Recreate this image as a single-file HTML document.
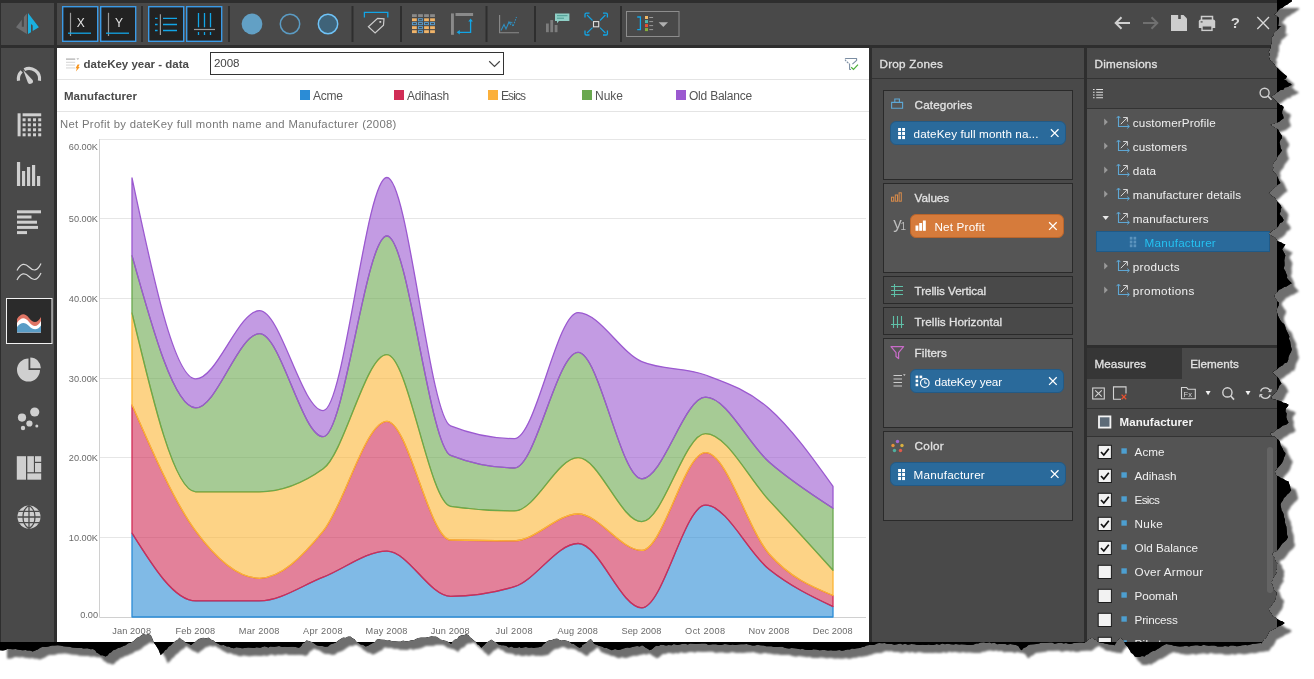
<!DOCTYPE html>
<html><head><meta charset="utf-8"><title>Discover</title>
<style>
*{box-sizing:border-box;margin:0;padding:0}
html,body{width:1314px;height:679px;overflow:hidden;background:#fff;font-family:"Liberation Sans",sans-serif;}
#shadow{position:absolute;left:0;top:0;width:1314px;height:679px;filter:drop-shadow(0 0 .5px rgba(0,0,0,.9)) drop-shadow(7.5px 8px 1.1px rgba(0,0,0,.57));}
#app{position:absolute;left:0;top:0;width:1314px;height:679px;background:#000;overflow:hidden;
clip-path:polygon(0.0px 0.0px,1291.8px 0.0px,1291.8px 1.6px,1289.2px 3.1px,1287.1px 4.7px,1285.2px 5.4px,1282.1px 7.9px,1280.2px 8.5px,1278.2px 10.4px,1276.8px 12.4px,1274.0px 14.6px,1276.9px 16.2px,1278.9px 17.8px,1278.9px 20.0px,1278.6px 23.7px,1278.2px 25.9px,1279.9px 26.3px,1281.5px 25.9px,1279.8px 26.9px,1278.0px 29.3px,1275.6px 30.8px,1274.1px 32.3px,1273.6px 35.1px,1271.8px 37.3px,1271.8px 40.2px,1271.6px 42.7px,1270.9px 45.0px,1270.8px 47.0px,1269.6px 50.0px,1268.5px 51.8px,1269.5px 54.0px,1268.9px 56.9px,1269.8px 59.9px,1272.4px 62.0px,1273.9px 64.0px,1275.6px 66.4px,1277.9px 68.2px,1280.0px 70.4px,1282.6px 72.8px,1285.0px 74.8px,1287.0px 76.2px,1285.9px 78.5px,1283.7px 79.4px,1286.0px 80.3px,1288.3px 82.8px,1290.4px 83.6px,1291.8px 84.9px,1289.9px 85.5px,1287.8px 87.1px,1284.7px 87.4px,1283.3px 89.7px,1280.5px 90.1px,1278.0px 91.9px,1276.5px 92.4px,1274.4px 94.7px,1273.3px 95.1px,1270.8px 97.2px,1272.8px 98.0px,1274.8px 99.9px,1276.9px 102.3px,1278.2px 103.0px,1280.1px 105.0px,1281.6px 105.0px,1283.7px 106.9px,1283.3px 108.4px,1282.2px 111.1px,1282.1px 113.4px,1283.1px 115.4px,1283.7px 118.3px,1280.9px 120.2px,1279.2px 121.7px,1277.3px 122.5px,1275.3px 123.1px,1272.2px 124.0px,1269.8px 124.8px,1272.1px 126.1px,1274.1px 127.4px,1276.7px 128.4px,1278.2px 129.6px,1279.4px 132.1px,1280.5px 133.7px,1282.1px 136.1px,1281.9px 138.3px,1280.5px 139.7px,1279.5px 142.6px,1280.3px 145.4px,1280.6px 148.1px,1282.1px 150.7px,1281.0px 151.7px,1279.7px 153.9px,1278.2px 155.5px,1277.1px 157.5px,1275.7px 160.2px,1274.0px 162.0px,1272.8px 164.1px,1273.2px 168.1px,1272.4px 170.1px,1273.7px 172.2px,1275.8px 174.2px,1277.3px 176.6px,1278.2px 178.5px,1279.2px 181.1px,1280.5px 183.1px,1278.1px 184.5px,1276.6px 185.7px,1274.0px 187.9px,1272.3px 190.1px,1270.1px 191.2px,1268.5px 193.5px,1270.7px 194.5px,1271.6px 196.3px,1274.1px 197.3px,1275.6px 199.3px,1276.9px 201.1px,1279.0px 203.3px,1280.5px 204.9px,1281.5px 207.4px,1280.6px 209.8px,1280.7px 211.6px,1279.5px 213.9px,1280.6px 215.4px,1282.4px 217.5px,1283.7px 220.0px,1282.6px 222.1px,1280.1px 222.9px,1278.9px 224.9px,1278.0px 226.7px,1276.3px 228.1px,1274.8px 229.3px,1271.9px 230.6px,1270.9px 231.9px,1268.5px 233.6px,1270.2px 235.0px,1272.3px 236.4px,1274.9px 237.5px,1276.3px 239.4px,1277.9px 241.3px,1281.4px 242.6px,1283.0px 243.7px,1285.4px 244.3px,1284.3px 246.3px,1282.1px 249.2px,1283.5px 251.8px,1284.5px 253.5px,1285.4px 255.6px,1284.7px 258.0px,1284.3px 260.2px,1284.5px 263.1px,1284.5px 265.4px,1283.7px 268.6px,1285.3px 271.1px,1286.3px 273.7px,1287.2px 275.5px,1287.0px 278.0px,1288.6px 279.9px,1289.8px 281.3px,1291.8px 283.2px,1289.5px 284.5px,1286.5px 286.4px,1284.2px 286.9px,1281.1px 288.9px,1278.9px 289.7px,1277.2px 292.2px,1275.4px 293.6px,1274.0px 296.2px,1275.7px 298.8px,1276.8px 300.9px,1278.9px 302.6px,1278.6px 305.8px,1277.6px 307.3px,1276.3px 310.7px,1277.5px 313.7px,1277.8px 315.3px,1279.1px 318.1px,1280.5px 320.5px,1282.0px 322.6px,1284.1px 324.1px,1285.4px 326.9px,1285.6px 328.6px,1286.6px 330.7px,1288.0px 333.4px,1289.4px 336.6px,1288.9px 338.8px,1290.2px 341.5px,1290.5px 344.0px,1291.1px 347.1px,1291.8px 349.6px,1291.0px 352.0px,1289.5px 354.6px,1288.4px 357.5px,1288.3px 359.8px,1287.0px 362.6px,1284.4px 363.3px,1282.8px 365.2px,1281.3px 366.1px,1278.9px 367.4px,1277.1px 369.2px,1274.5px 370.5px,1272.4px 372.3px,1274.0px 374.2px,1275.5px 375.8px,1277.2px 376.8px,1278.9px 378.8px,1280.2px 381.5px,1281.5px 383.6px,1279.4px 385.6px,1278.3px 388.3px,1277.5px 389.7px,1275.9px 392.4px,1273.5px 394.0px,1271.8px 396.6px,1270.8px 398.2px,1273.7px 399.6px,1276.5px 400.1px,1279.1px 400.7px,1281.5px 401.5px,1283.3px 402.7px,1285.5px 403.1px,1288.6px 404.7px,1287.9px 406.2px,1285.9px 408.5px,1285.4px 411.2px,1286.7px 413.6px,1286.3px 417.3px,1287.3px 420.2px,1288.6px 422.5px,1286.8px 424.2px,1285.2px 425.1px,1282.9px 425.5px,1280.5px 427.4px,1278.7px 428.7px,1276.5px 429.4px,1274.4px 431.9px,1271.3px 432.3px,1269.8px 433.9px,1272.2px 435.9px,1274.0px 436.5px,1276.3px 438.6px,1278.9px 440.0px,1280.1px 442.3px,1280.5px 444.9px,1281.5px 446.7px,1282.7px 448.8px,1283.6px 450.9px,1285.4px 453.0px,1285.2px 455.3px,1284.1px 457.3px,1283.2px 460.6px,1282.1px 462.7px,1280.6px 464.7px,1278.5px 466.9px,1277.3px 468.3px,1275.0px 470.8px,1275.1px 473.6px,1276.3px 475.6px,1279.3px 476.8px,1281.1px 478.3px,1283.2px 478.8px,1285.7px 480.4px,1288.6px 481.5px,1289.0px 483.3px,1290.2px 486.5px,1290.3px 488.3px,1291.2px 490.2px,1289.1px 492.9px,1287.4px 494.2px,1285.4px 496.7px,1283.8px 498.1px,1282.9px 500.6px,1281.3px 502.6px,1280.5px 504.8px,1281.1px 507.6px,1281.6px 510.4px,1282.9px 512.2px,1283.7px 514.5px,1284.1px 517.4px,1285.0px 519.5px,1284.9px 522.1px,1285.4px 524.3px,1286.4px 526.7px,1286.7px 530.1px,1286.9px 531.6px,1287.1px 534.9px,1288.0px 537.2px,1286.4px 540.1px,1284.8px 541.4px,1282.1px 543.7px,1280.3px 546.6px,1278.9px 548.6px,1277.0px 550.7px,1273.8px 552.3px,1271.8px 553.4px,1272.9px 555.7px,1274.8px 557.7px,1275.3px 561.2px,1277.3px 563.1px,1276.7px 565.4px,1276.9px 568.2px,1275.8px 570.2px,1276.3px 572.9px,1274.8px 575.3px,1273.1px 577.8px,1272.8px 580.0px,1270.8px 582.6px,1272.2px 584.5px,1273.2px 587.7px,1274.4px 590.4px,1276.3px 592.3px,1276.3px 594.2px,1275.8px 597.0px,1275.0px 600.0px,1274.0px 602.0px,1271.9px 604.4px,1270.6px 606.8px,1268.5px 608.5px,1269.5px 611.6px,1271.8px 614.1px,1272.4px 616.6px,1274.9px 617.4px,1277.3px 619.0px,1280.1px 620.7px,1282.3px 621.3px,1284.7px 623.1px,1282.8px 624.5px,1280.1px 626.1px,1278.6px 626.2px,1276.3px 627.9px,1274.5px 628.5px,1271.3px 630.4px,1269.2px 631.2px,1268.2px 633.4px,1267.2px 635.4px,1265.9px 637.7px,1264.0px 639.2px,1262.1px 641.9px,1261.1px 643.5px,1262.9px 642.7px,1260.7px 643.1px,1258.2px 643.3px,1255.0px 643.8px,1253.4px 643.7px,1250.3px 644.4px,1247.8px 645.2px,1245.4px 645.1px,1242.0px 645.3px,1239.5px 646.0px,1236.4px 646.2px,1233.3px 645.6px,1230.5px 645.5px,1228.7px 646.5px,1225.0px 645.9px,1222.7px 646.4px,1219.8px 646.6px,1217.6px 646.5px,1214.4px 645.5px,1211.4px 645.4px,1208.8px 645.8px,1205.5px 645.2px,1203.5px 644.8px,1200.8px 645.9px,1197.6px 645.2px,1195.3px 645.2px,1191.8px 645.7px,1189.0px 646.5px,1186.1px 645.7px,1183.4px 646.2px,1180.0px 646.4px,1177.4px 646.2px,1173.8px 645.8px,1171.9px 644.9px,1169.0px 644.4px,1166.2px 643.9px,1163.6px 645.2px,1161.3px 646.4px,1159.9px 647.7px,1157.6px 648.9px,1154.9px 650.8px,1152.9px 650.9px,1149.8px 652.7px,1148.6px 654.1px,1145.8px 655.0px,1144.8px 656.5px,1141.9px 655.9px,1139.8px 657.1px,1137.0px 657.0px,1134.8px 656.5px,1133.1px 654.1px,1131.0px 652.7px,1130.2px 651.0px,1129.1px 649.2px,1127.6px 646.8px,1126.0px 645.2px,1125.1px 643.9px,1124.0px 641.3px,1122.6px 639.5px,1120.9px 637.6px,1118.8px 638.9px,1117.2px 641.0px,1115.7px 643.3px,1114.7px 645.2px,1112.4px 644.8px,1109.5px 644.5px,1107.1px 643.9px,1104.7px 643.5px,1103.3px 642.9px,1100.8px 642.7px,1098.2px 642.0px,1096.7px 640.0px,1094.1px 638.9px,1092.0px 637.6px,1090.3px 638.5px,1087.6px 639.7px,1086.8px 640.9px,1084.5px 642.7px,1081.9px 642.4px,1079.1px 642.6px,1076.8px 642.8px,1073.8px 643.0px,1071.5px 643.7px,1069.4px 643.9px,1066.0px 643.1px,1063.7px 643.5px,1061.2px 642.8px,1058.0px 643.1px,1054.6px 643.8px,1052.1px 642.4px,1049.6px 642.4px,1046.8px 642.7px,1044.3px 642.8px,1040.9px 642.8px,1039.1px 643.4px,1036.4px 644.1px,1034.0px 644.2px,1030.3px 644.5px,1028.0px 645.2px,1026.3px 647.0px,1023.6px 648.0px,1021.7px 650.2px,1020.3px 649.2px,1018.5px 646.2px,1016.7px 645.2px,1013.1px 644.4px,1010.3px 644.1px,1007.2px 644.8px,1005.5px 643.9px,1002.7px 644.1px,999.1px 643.9px,997.0px 644.2px,994.7px 642.7px,991.3px 643.2px,989.7px 642.2px,986.2px 642.9px,984.0px 642.2px,980.7px 642.6px,978.2px 643.5px,976.2px 643.4px,973.2px 644.7px,970.1px 644.9px,967.7px 644.9px,965.1px 644.6px,961.6px 644.3px,959.3px 644.6px,955.8px 644.0px,953.6px 644.6px,950.8px 644.2px,947.7px 643.8px,944.9px 644.2px,942.4px 643.6px,939.3px 644.7px,936.8px 643.9px,933.4px 645.0px,931.2px 645.1px,928.7px 644.6px,926.0px 645.1px,922.4px 644.7px,919.8px 644.9px,916.4px 644.7px,914.8px 644.2px,911.4px 644.1px,907.9px 644.8px,905.3px 643.8px,902.4px 644.6px,900.2px 643.6px,897.2px 644.2px,894.3px 644.7px,891.8px 643.9px,889.6px 644.1px,887.3px 643.9px,884.7px 642.9px,882.1px 643.2px,879.2px 642.9px,877.6px 643.3px,873.9px 644.9px,871.7px 645.1px,869.6px 644.9px,866.5px 645.5px,864.2px 646.7px,862.2px 647.1px,859.9px 648.1px,857.0px 648.2px,854.3px 648.8px,851.9px 648.5px,849.9px 649.6px,847.4px 649.5px,844.5px 650.2px,841.9px 650.7px,839.4px 650.0px,836.1px 650.6px,832.8px 650.6px,831.0px 650.3px,828.0px 650.5px,824.6px 650.1px,822.8px 650.0px,819.3px 650.2px,816.4px 649.4px,813.3px 649.3px,811.4px 649.9px,808.5px 650.0px,805.3px 649.7px,802.4px 648.8px,800.2px 649.2px,796.7px 648.4px,794.6px 648.2px,791.6px 647.9px,789.1px 648.4px,785.4px 648.1px,782.4px 646.7px,780.4px 646.8px,777.4px 647.1px,773.9px 647.0px,771.5px 646.3px,769.1px 646.2px,766.1px 646.3px,763.8px 645.4px,760.1px 645.2px,757.8px 644.7px,754.6px 645.4px,752.6px 645.5px,750.2px 645.1px,746.6px 643.9px,743.9px 644.2px,740.9px 644.2px,738.4px 644.4px,735.4px 644.9px,732.5px 644.5px,730.5px 645.0px,726.9px 644.3px,724.8px 644.1px,721.1px 644.9px,718.8px 644.9px,716.1px 644.3px,712.6px 644.2px,710.8px 644.5px,708.3px 644.8px,705.5px 643.6px,701.6px 643.4px,699.2px 643.7px,695.9px 643.9px,693.7px 643.7px,690.3px 643.5px,687.8px 644.4px,685.2px 643.8px,681.9px 644.1px,679.9px 644.6px,677.5px 644.9px,673.8px 644.1px,671.7px 645.2px,668.6px 644.9px,666.1px 645.5px,663.6px 644.9px,660.6px 644.7px,658.7px 646.1px,656.0px 645.7px,654.4px 647.1px,652.0px 649.3px,649.6px 650.2px,648.2px 649.1px,645.7px 647.7px,643.5px 646.0px,642.1px 645.2px,639.8px 646.4px,637.1px 646.1px,634.3px 646.6px,632.4px 647.1px,629.5px 647.7px,627.2px 647.6px,623.4px 648.6px,620.6px 649.4px,618.2px 650.0px,615.0px 649.1px,611.9px 650.2px,609.5px 649.3px,606.9px 648.0px,604.7px 648.0px,601.9px 646.4px,598.8px 645.8px,596.7px 644.8px,594.3px 643.9px,593.6px 642.9px,592.0px 640.1px,590.6px 638.9px,589.1px 640.1px,586.2px 642.7px,584.3px 643.9px,582.3px 644.9px,581.6px 647.1px,579.3px 647.7px,576.5px 646.0px,573.9px 644.0px,571.4px 643.6px,569.2px 641.4px,566.1px 640.6px,563.8px 640.0px,561.7px 640.5px,559.6px 639.9px,557.1px 638.6px,554.1px 638.9px,551.3px 640.2px,549.1px 640.2px,546.6px 641.4px,545.3px 643.0px,543.5px 644.2px,541.6px 646.4px,538.7px 647.3px,536.0px 647.5px,533.6px 647.9px,531.8px 647.6px,529.0px 647.7px,526.0px 647.1px,524.3px 647.2px,521.0px 648.1px,519.5px 647.1px,517.1px 647.7px,513.9px 647.7px,511.3px 646.6px,508.8px 647.4px,506.1px 645.7px,503.4px 645.2px,501.4px 645.2px,498.6px 644.4px,495.7px 642.0px,494.4px 641.7px,491.3px 639.6px,489.5px 640.8px,486.3px 642.7px,484.4px 645.0px,482.9px 646.3px,481.3px 647.7px,479.1px 645.1px,477.3px 644.3px,476.0px 642.1px,473.7px 640.2px,471.8px 638.6px,469.9px 637.1px,468.5px 635.0px,466.2px 633.9px,463.8px 635.3px,461.7px 635.1px,458.7px 636.4px,457.4px 638.7px,454.4px 639.8px,452.6px 641.4px,451.1px 643.9px,449.3px 642.5px,446.6px 640.9px,443.6px 640.2px,440.4px 639.4px,439.0px 638.3px,436.0px 636.4px,433.8px 636.6px,431.4px 636.2px,428.6px 636.9px,425.5px 637.4px,423.2px 637.4px,421.0px 637.6px,418.3px 638.0px,415.7px 639.0px,414.1px 640.1px,410.9px 640.2px,408.9px 640.9px,405.6px 641.3px,403.1px 640.4px,400.9px 641.5px,398.4px 641.4px,395.3px 641.3px,392.3px 641.3px,389.7px 640.3px,386.9px 640.5px,384.7px 639.7px,381.0px 639.4px,378.3px 638.9px,376.0px 640.0px,375.4px 641.8px,373.2px 642.7px,370.1px 644.4px,368.0px 645.8px,365.7px 646.4px,363.0px 644.8px,360.7px 644.5px,358.2px 642.7px,356.2px 641.6px,354.7px 639.3px,352.2px 638.0px,350.6px 636.4px,348.0px 636.6px,345.8px 637.7px,343.1px 637.6px,341.3px 638.4px,338.9px 640.0px,337.6px 640.9px,335.5px 642.7px,332.4px 643.7px,330.2px 644.5px,328.0px 646.4px,325.2px 646.7px,322.3px 646.1px,319.9px 646.0px,316.6px 645.2px,314.6px 643.8px,311.8px 642.1px,309.6px 641.2px,306.5px 640.2px,304.6px 642.6px,302.5px 643.5px,301.3px 645.9px,299.0px 647.7px,295.6px 646.9px,293.1px 646.7px,291.0px 646.8px,287.4px 646.9px,284.9px 646.8px,282.2px 647.0px,279.1px 646.0px,276.4px 646.4px,274.3px 646.8px,270.2px 646.6px,268.4px 647.5px,264.6px 646.3px,262.4px 647.0px,260.2px 647.7px,256.6px 647.3px,254.2px 648.1px,251.3px 647.7px,248.0px 647.5px,244.9px 647.9px,242.0px 648.3px,239.8px 647.8px,236.3px 647.3px,234.0px 648.2px,231.2px 647.7px,228.7px 646.6px,226.8px 646.4px,223.7px 645.0px,220.8px 645.2px,218.6px 643.9px,215.6px 642.4px,213.7px 640.6px,211.4px 639.8px,208.5px 637.6px,206.5px 638.3px,203.1px 637.7px,200.9px 638.3px,198.5px 638.9px,196.2px 641.0px,194.3px 642.5px,193.5px 643.1px,191.0px 645.2px,189.0px 643.8px,185.9px 642.7px,183.4px 640.5px,181.1px 639.3px,179.6px 637.6px,177.3px 640.0px,175.7px 640.8px,172.9px 643.1px,170.9px 645.2px,168.5px 646.7px,166.8px 649.2px,165.0px 650.3px,163.3px 652.7px,161.7px 653.9px,160.8px 655.2px,159.6px 652.4px,158.6px 649.8px,157.3px 647.8px,155.8px 645.2px,154.1px 643.0px,153.1px 640.2px,152.1px 637.8px,150.8px 635.1px,148.2px 634.1px,146.1px 634.8px,143.2px 633.9px,141.3px 635.2px,139.1px 636.9px,137.8px 637.2px,135.7px 638.9px,133.6px 641.1px,130.4px 642.7px,128.1px 643.2px,125.6px 645.2px,123.4px 646.0px,120.9px 647.3px,117.5px 648.2px,116.1px 649.2px,113.1px 650.2px,111.2px 652.3px,109.2px 653.3px,107.5px 655.4px,105.5px 656.5px,102.6px 655.3px,100.5px 655.2px,99.0px 653.7px,96.5px 652.6px,95.4px 650.6px,93.0px 648.9px,90.7px 649.2px,87.4px 648.2px,83.5px 648.6px,81.6px 647.9px,78.3px 648.0px,75.4px 647.7px,72.1px 647.5px,69.6px 646.7px,66.0px 646.5px,63.4px 646.3px,60.3px 645.4px,57.8px 645.2px,54.4px 645.5px,52.0px 645.5px,48.4px 646.4px,45.6px 646.9px,42.7px 646.7px,40.2px 647.7px,37.7px 649.5px,35.7px 650.2px,32.7px 651.5px,30.0px 650.5px,27.3px 650.6px,25.7px 650.0px,22.6px 650.2px,20.7px 649.9px,17.5px 649.4px,15.7px 649.0px,12.7px 649.2px,10.1px 648.9px,7.1px 648.9px,5.7px 650.0px,2.8px 650.5px,0.0px 650.2px);
}
#img{position:absolute;left:0;top:0;width:1277px;height:642px;background:#2e2e2e;overflow:hidden}
.abs{position:absolute}
.panel{position:absolute;background:#494949}
.t{position:absolute;white-space:nowrap}
svg{position:absolute;overflow:visible}
.zone{position:absolute;left:11px;width:190px;background:#555;border:1px solid #333}
.chip{position:absolute;height:23px;border-radius:5px;background:#2a6b9c;border:1px solid #1f5680}
.cb{position:absolute;width:13px;height:13px;background:#f0f0f0;border:1px solid #222}
</style></head><body>
<div id="shadow"><div id="app"><div id="img">
<div class="panel" id="logo" style="left:1px;top:3px;width:53px;height:42px"></div>
<div class="panel" id="toolbar" style="left:57px;top:3px;width:1220px;height:42px"></div>
<div class="panel" id="rail" style="left:1px;top:48px;width:53px;height:594px"></div>
<div class="abs" id="content" style="left:57px;top:48px;width:812px;height:594px;background:#fff"></div>
<div class="panel" id="dz" style="left:872px;top:48px;width:212px;height:594px"></div>
<div class="panel" id="dim" style="left:1087px;top:48px;width:190px;height:297px"></div>
<div class="panel" id="el" style="left:1087px;top:348px;width:190px;height:294px"></div>
<div class="abs" style="left:57px;top:79px;width:812px;height:1px;background:#e4e4e4"></div>
<div class="abs" style="left:57px;top:111px;width:812px;height:1px;background:#e4e4e4"></div>
<div class="t" style="left:83.5px;top:58px;font-size:11.5px;line-height:12px;color:#4a4a4a;letter-spacing:0.00px;font-weight:bold;">dateKey year - data</div>
<div class="abs" style="left:210px;top:52px;width:294px;height:23px;border:1px solid #333;background:#fff"></div>
<div class="t" style="left:214.0px;top:57px;font-size:11.6px;line-height:12px;color:#444;letter-spacing:-0.08px;">2008</div>
<div class="t" style="left:64.0px;top:90px;font-size:11.5px;line-height:12px;color:#4a4a4a;letter-spacing:0.01px;font-weight:bold;">Manufacturer</div>
<div class="abs" style="left:300px;top:90px;width:10px;height:10px;background:#2b8cd6"></div>
<div class="t" style="left:313.0px;top:89px;font-size:12px;line-height:14px;color:#555;letter-spacing:-0.27px;">Acme</div>
<div class="abs" style="left:394px;top:90px;width:10px;height:10px;background:#d12d56"></div>
<div class="t" style="left:407.0px;top:89px;font-size:12px;line-height:14px;color:#555;letter-spacing:-0.19px;">Adihash</div>
<div class="abs" style="left:488px;top:90px;width:10px;height:10px;background:#fbb03b"></div>
<div class="t" style="left:501.0px;top:89px;font-size:12px;line-height:14px;color:#555;letter-spacing:-0.93px;">Esics</div>
<div class="abs" style="left:582px;top:90px;width:10px;height:10px;background:#6aa84f"></div>
<div class="t" style="left:595.0px;top:89px;font-size:12px;line-height:14px;color:#555;letter-spacing:-0.00px;">Nuke</div>
<div class="abs" style="left:676px;top:90px;width:10px;height:10px;background:#9b59d0"></div>
<div class="t" style="left:689.0px;top:89px;font-size:12px;line-height:14px;color:#555;letter-spacing:-0.22px;">Old Balance</div>
<div class="t" style="left:60.0px;top:118px;font-size:11.3px;line-height:12px;color:#777;letter-spacing:0.31px;">Net Profit by dateKey full month name and Manufacturer (2008)</div>
<svg width="1277" height="642" style="left:0;top:0;font-family:'Liberation Sans',sans-serif"><line x1="99.5" x2="866" y1="139.5" y2="139.5" stroke="#e6e6e6" stroke-width="1"/>
<line x1="99.5" x2="866" y1="218.5" y2="218.5" stroke="#e6e6e6" stroke-width="1"/>
<line x1="99.5" x2="866" y1="298.5" y2="298.5" stroke="#e6e6e6" stroke-width="1"/>
<line x1="99.5" x2="866" y1="378.5" y2="378.5" stroke="#e6e6e6" stroke-width="1"/>
<line x1="99.5" x2="866" y1="457.5" y2="457.5" stroke="#e6e6e6" stroke-width="1"/>
<line x1="99.5" x2="866" y1="537.5" y2="537.5" stroke="#e6e6e6" stroke-width="1"/>
<line x1="99.5" x2="99.5" y1="139" y2="617.5" stroke="#d0d0d0" stroke-width="1"/>
<line x1="99.5" x2="866" y1="617.5" y2="617.5" stroke="#d0d0d0" stroke-width="1"/>
<path d="M132.0,533.1C153.2,567.0 174.5,600.9 195.7,600.9C217.0,600.9 238.2,600.9 259.5,600.9C280.7,600.9 301.9,585.5 323.2,577.2C344.4,568.9 365.7,551.1 386.9,551.1C408.2,551.1 429.4,596.3 450.6,596.3C471.9,596.3 493.1,593.1 514.4,586.7C535.6,580.3 556.8,543.5 578.1,543.5C599.3,543.5 620.6,607.8 641.8,607.8C663.1,607.8 684.3,505.2 705.5,505.2C726.8,505.2 748.0,552.6 769.3,569.5C790.5,586.4 811.8,596.5 833.0,606.6L833.0,617.0C811.8,617.0 790.5,617.0 769.3,617.0C748.0,617.0 726.8,617.0 705.5,617.0C684.3,617.0 663.1,617.0 641.8,617.0C620.6,617.0 599.3,617.0 578.1,617.0C556.8,617.0 535.6,617.0 514.4,617.0C493.1,617.0 471.9,617.0 450.6,617.0C429.4,617.0 408.2,617.0 386.9,617.0C365.7,617.0 344.4,617.0 323.2,617.0C301.9,617.0 280.7,617.0 259.5,617.0C238.2,617.0 217.0,617.0 195.7,617.0C174.5,617.0 153.2,617.0 132.0,617.0Z" fill="#2b8cd6" fill-opacity=".6" stroke="#2b8cd6" stroke-width="1.3" stroke-linejoin="round"/>
<path d="M132.0,404.9C153.2,453.6 174.5,502.3 195.7,531.2C217.0,560.1 238.2,578.3 259.5,578.3C280.7,578.3 301.9,557.4 323.2,531.2C344.4,505.0 365.7,421.3 386.9,421.3C408.2,421.3 429.4,539.5 450.6,540.0C471.9,540.5 493.1,540.8 514.4,540.8C535.6,540.8 556.8,514.0 578.1,514.0C599.3,514.0 620.6,550.4 641.8,550.4C663.1,550.4 684.3,452.7 705.5,452.7C726.8,452.7 748.0,530.4 769.3,554.2C790.5,578.0 811.8,586.8 833.0,595.5L833.0,606.6C811.8,596.5 790.5,586.4 769.3,569.5C748.0,552.6 726.8,505.2 705.5,505.2C684.3,505.2 663.1,607.8 641.8,607.8C620.6,607.8 599.3,543.5 578.1,543.5C556.8,543.5 535.6,580.3 514.4,586.7C493.1,593.1 471.9,596.3 450.6,596.3C429.4,596.3 408.2,551.1 386.9,551.1C365.7,551.1 344.4,568.9 323.2,577.2C301.9,585.5 280.7,600.9 259.5,600.9C238.2,600.9 217.0,600.9 195.7,600.9C174.5,600.9 153.2,567.0 132.0,533.1Z" fill="#d12d56" fill-opacity=".6" stroke="#d12d56" stroke-width="1.3" stroke-linejoin="round"/>
<path d="M132.0,313.0C153.2,402.4 174.5,491.8 195.7,491.8C217.0,491.8 238.2,491.8 259.5,491.8C280.7,491.8 301.9,484.1 323.2,468.8C344.4,453.5 365.7,354.7 386.9,354.7C408.2,354.7 429.4,503.2 450.6,506.3C471.9,509.4 493.1,510.9 514.4,510.9C535.6,510.9 556.8,457.7 578.1,457.7C599.3,457.7 620.6,521.7 641.8,521.7C663.1,521.7 684.3,433.6 705.5,433.6C726.8,433.6 748.0,477.8 769.3,500.6C790.5,523.4 811.8,546.8 833.0,570.3L833.0,595.5C811.8,586.8 790.5,578.0 769.3,554.2C748.0,530.4 726.8,452.7 705.5,452.7C684.3,452.7 663.1,550.4 641.8,550.4C620.6,550.4 599.3,514.0 578.1,514.0C556.8,514.0 535.6,540.8 514.4,540.8C493.1,540.8 471.9,540.5 450.6,540.0C429.4,539.5 408.2,421.3 386.9,421.3C365.7,421.3 344.4,505.0 323.2,531.2C301.9,557.4 280.7,578.3 259.5,578.3C238.2,578.3 217.0,560.1 195.7,531.2C174.5,502.3 153.2,453.6 132.0,404.9Z" fill="#fcb535" fill-opacity=".6" stroke="#fcb535" stroke-width="1.3" stroke-linejoin="round"/>
<path d="M132.0,255.6C153.2,331.8 174.5,407.9 195.7,407.9C217.0,407.9 238.2,333.7 259.5,333.7C280.7,333.7 301.9,436.7 323.2,436.7C344.4,436.7 365.7,236.0 386.9,236.0C408.2,236.0 429.4,447.0 450.6,455.4C471.9,463.8 493.1,468.0 514.4,468.0C535.6,468.0 556.8,352.4 578.1,352.4C599.3,352.4 620.6,478.8 641.8,478.8C663.1,478.8 684.3,397.2 705.5,397.2C726.8,397.2 748.0,443.8 769.3,462.3C790.5,480.8 811.8,494.6 833.0,508.3L833.0,570.3C811.8,546.8 790.5,523.4 769.3,500.6C748.0,477.8 726.8,433.6 705.5,433.6C684.3,433.6 663.1,521.7 641.8,521.7C620.6,521.7 599.3,457.7 578.1,457.7C556.8,457.7 535.6,510.9 514.4,510.9C493.1,510.9 471.9,509.4 450.6,506.3C429.4,503.2 408.2,354.7 386.9,354.7C365.7,354.7 344.4,453.5 323.2,468.8C301.9,484.1 280.7,491.8 259.5,491.8C238.2,491.8 217.0,491.8 195.7,491.8C174.5,491.8 153.2,402.4 132.0,313.0Z" fill="#6aa84f" fill-opacity=".6" stroke="#6aa84f" stroke-width="1.3" stroke-linejoin="round"/>
<path d="M132.0,177.9C153.2,278.4 174.5,378.9 195.7,378.9C217.0,378.9 238.2,310.7 259.5,310.7C280.7,310.7 301.9,410.6 323.2,410.6C344.4,410.6 365.7,177.5 386.9,177.5C408.2,177.5 429.4,417.4 450.6,425.9C471.9,434.4 493.1,438.6 514.4,438.6C535.6,438.6 556.8,312.6 578.1,312.6C599.3,312.6 620.6,352.7 641.8,361.6C663.1,370.5 684.3,367.1 705.5,375.0C726.8,382.9 748.0,390.1 769.3,408.7C790.5,427.3 811.8,456.8 833.0,486.4L833.0,508.3C811.8,494.6 790.5,480.8 769.3,462.3C748.0,443.8 726.8,397.2 705.5,397.2C684.3,397.2 663.1,478.8 641.8,478.8C620.6,478.8 599.3,352.4 578.1,352.4C556.8,352.4 535.6,468.0 514.4,468.0C493.1,468.0 471.9,463.8 450.6,455.4C429.4,447.0 408.2,236.0 386.9,236.0C365.7,236.0 344.4,436.7 323.2,436.7C301.9,436.7 280.7,333.7 259.5,333.7C238.2,333.7 217.0,407.9 195.7,407.9C174.5,407.9 153.2,331.8 132.0,255.6Z" fill="#9b59d0" fill-opacity=".6" stroke="#9b59d0" stroke-width="1.3" stroke-linejoin="round"/>
<text x="68.8" y="150.0" font-size="9.2" fill="#6a6a6a" textLength="29.2" lengthAdjust="spacing">60.00K</text>
<text x="68.8" y="221.8" font-size="9.2" fill="#6a6a6a" textLength="29.2" lengthAdjust="spacing">50.00K</text>
<text x="68.8" y="301.5" font-size="9.2" fill="#6a6a6a" textLength="29.2" lengthAdjust="spacing">40.00K</text>
<text x="68.8" y="381.5" font-size="9.2" fill="#6a6a6a" textLength="29.2" lengthAdjust="spacing">30.00K</text>
<text x="68.8" y="461.0" font-size="9.2" fill="#6a6a6a" textLength="29.2" lengthAdjust="spacing">20.00K</text>
<text x="68.8" y="540.6" font-size="9.2" fill="#6a6a6a" textLength="29.2" lengthAdjust="spacing">10.00K</text>
<text x="80.2" y="617.7" font-size="9.2" fill="#6a6a6a" textLength="17.8" lengthAdjust="spacing">0.00</text>
<text x="112.2" y="633.7" font-size="9.2" fill="#6a6a6a" textLength="38.8" lengthAdjust="spacing">Jan 2008</text>
<text x="175.6" y="633.7" font-size="9.2" fill="#6a6a6a" textLength="39.5" lengthAdjust="spacing">Feb 2008</text>
<text x="238.8" y="633.7" font-size="9.2" fill="#6a6a6a" textLength="40.6" lengthAdjust="spacing">Mar 2008</text>
<text x="303.0" y="633.7" font-size="9.2" fill="#6a6a6a" textLength="39.5" lengthAdjust="spacing">Apr 2008</text>
<text x="365.6" y="633.7" font-size="9.2" fill="#6a6a6a" textLength="41.8" lengthAdjust="spacing">May 2008</text>
<text x="430.8" y="633.7" font-size="9.2" fill="#6a6a6a" textLength="38.8" lengthAdjust="spacing">Jun 2008</text>
<text x="495.5" y="633.7" font-size="9.2" fill="#6a6a6a" textLength="37.0" lengthAdjust="spacing">Jul 2008</text>
<text x="557.4" y="633.7" font-size="9.2" fill="#6a6a6a" textLength="40.5" lengthAdjust="spacing">Aug 2008</text>
<text x="621.5" y="633.7" font-size="9.2" fill="#6a6a6a" textLength="39.8" lengthAdjust="spacing">Sep 2008</text>
<text x="685.1" y="633.7" font-size="9.2" fill="#6a6a6a" textLength="40.0" lengthAdjust="spacing">Oct 2008</text>
<text x="748.5" y="633.7" font-size="9.2" fill="#6a6a6a" textLength="40.8" lengthAdjust="spacing">Nov 2008</text>
<text x="812.7" y="633.7" font-size="9.2" fill="#6a6a6a" textLength="39.8" lengthAdjust="spacing">Dec 2008</text></svg>
<svg width="1277" height="48" style="left:0;top:0"><polygon points="26.9,13.4 26.9,34.0 16.0,27.3 21.8,19.8 21.8,26.7 23.9,26.7 23.9,17.1" fill="#6d6e70"/>
<polygon points="28.0,13.1 38.9,27.3 32.7,31.1 32.7,25.5 31.0,24.0 31.0,32.2 28.0,34.0" fill="#1ab0e0"/>
<rect x="62.7" y="6.7" width="35" height="34.6" fill="#222" stroke="#3b9ae6" stroke-width="1.4"/>
<rect x="100.7" y="6.7" width="35" height="34.6" fill="#222" stroke="#3b9ae6" stroke-width="1.4"/>
<rect x="148.7" y="6.7" width="35" height="34.6" fill="#222" stroke="#3b9ae6" stroke-width="1.4"/>
<rect x="186.7" y="6.7" width="35" height="34.6" fill="#222" stroke="#3b9ae6" stroke-width="1.4"/>
<line x1="70.5" x2="70.5" y1="12.8" y2="36" stroke="#999" stroke-width="1.2"/>
<line x1="68.0" x2="91.0" y1="33.2" y2="33.2" stroke="#12a5e6" stroke-width="1.3"/>
<line x1="108.5" x2="108.5" y1="12.8" y2="36" stroke="#999" stroke-width="1.2"/>
<line x1="106.0" x2="129.0" y1="33.2" y2="33.2" stroke="#12a5e6" stroke-width="1.3"/>
<text x="80.8" y="27" text-anchor="middle" font-size="12" fill="#e4e4e4" font-family="Liberation Sans,sans-serif">X</text>
<text x="119" y="27" text-anchor="middle" font-size="12" fill="#e4e4e4" font-family="Liberation Sans,sans-serif">Y</text>
<line x1="160.4" x2="160.4" y1="14.2" y2="35" stroke="#999" stroke-width="1.2"/>
<path d="M155,18.4 H157.6 M163,18.4 H177" stroke="#12a5e6" stroke-width="1.3"/>
<path d="M155,24.5 H157.6 M163,24.5 H177" stroke="#12a5e6" stroke-width="1.3"/>
<path d="M155,30.5 H157.6 M163,30.5 H177" stroke="#12a5e6" stroke-width="1.3"/>
<line x1="194" x2="215" y1="29.5" y2="29.5" stroke="#999" stroke-width="1.2"/>
<path d="M198.5,13 V27.3 M198.5,32 V35" stroke="#12a5e6" stroke-width="1.3"/>
<path d="M204.5,13 V27.3 M204.5,32 V35" stroke="#12a5e6" stroke-width="1.3"/>
<path d="M210.5,13 V27.3 M210.5,32 V35" stroke="#12a5e6" stroke-width="1.3"/>
<rect x="141.0" y="6" width="2" height="36" fill="#2e2e2e"/>
<rect x="228.0" y="6" width="2" height="36" fill="#2e2e2e"/>
<rect x="351.5" y="6" width="2" height="36" fill="#2e2e2e"/>
<rect x="400.0" y="6" width="2" height="36" fill="#2e2e2e"/>
<rect x="485.5" y="6" width="2" height="36" fill="#2e2e2e"/>
<rect x="534.0" y="6" width="2" height="36" fill="#2e2e2e"/>
<rect x="620.0" y="6" width="2" height="36" fill="#2e2e2e"/>
<circle cx="252" cy="24" r="10.4" fill="#62a0c5"/>
<circle cx="290" cy="24" r="9.7" fill="none" stroke="#5b9bc3" stroke-width="1.5"/>
<circle cx="328" cy="24" r="9.7" fill="#3f6379" stroke="#6fc3f7" stroke-width="1.5"/>
<path d="M364.4,17.6 V12.4 H387.8 V17.6" stroke="#12a5e6" stroke-width="1.3" fill="none"/>
<path d="M368.4,26.8 L377.6,18.4 L384,18.8 L383.5,25.1 L375.1,33 Z" stroke="#ccc" stroke-width="1.2" fill="none"/>
<rect x="379.4" y="21" width="1.8" height="1.8" fill="#ccc"/>
<rect x="412.0" y="14.2" width="4.8" height="2.8" fill="#8a8a8a"/>
<rect x="418.1" y="14.2" width="4.8" height="2.8" fill="#8a8a8a"/>
<rect x="424.1" y="14.2" width="4.8" height="2.8" fill="#8a8a8a"/>
<rect x="430.1" y="14.2" width="4.8" height="2.8" fill="#8a8a8a"/>
<rect x="412.0" y="18.3" width="4.8" height="2.9" fill="#f0b469"/>
<rect x="418.4" y="18.7" width="4" height="2.1" fill="none" stroke="#5aa3d8" stroke-width=".9"/>
<rect x="424.1" y="18.3" width="4.8" height="2.9" fill="#f0b469"/>
<rect x="430.1" y="18.3" width="4.8" height="2.9" fill="#f0b469"/>
<rect x="412.4" y="22.6" width="4" height="2.1" fill="none" stroke="#5aa3d8" stroke-width=".9"/>
<rect x="418.4" y="22.6" width="4" height="2.1" fill="none" stroke="#5aa3d8" stroke-width=".9"/>
<rect x="424.5" y="22.6" width="4" height="2.1" fill="none" stroke="#5aa3d8" stroke-width=".9"/>
<rect x="430.5" y="22.6" width="4" height="2.1" fill="none" stroke="#5aa3d8" stroke-width=".9"/>
<rect x="412.0" y="26.2" width="4.8" height="2.9" fill="#f0b469"/>
<rect x="418.4" y="26.6" width="4" height="2.1" fill="none" stroke="#5aa3d8" stroke-width=".9"/>
<rect x="424.1" y="26.2" width="4.8" height="2.9" fill="#f0b469"/>
<rect x="430.1" y="26.2" width="4.8" height="2.9" fill="#f0b469"/>
<rect x="412.0" y="30.2" width="4.8" height="2.9" fill="#f0b469"/>
<rect x="418.4" y="30.6" width="4" height="2.1" fill="none" stroke="#5aa3d8" stroke-width=".9"/>
<rect x="424.1" y="30.2" width="4.8" height="2.9" fill="#f0b469"/>
<rect x="430.1" y="30.2" width="4.8" height="2.9" fill="#f0b469"/>
<rect x="451" y="13.4" width="2.9" height="21.4" fill="#8a8a8a"/><rect x="455.5" y="13" width="17.6" height="3" fill="#8a8a8a"/>
<path d="M470.6,20 V32.3 H458.5" stroke="#12a5e6" stroke-width="1.3" fill="none"/>
<path d="M468.3,21.5 L470.6,18.5 L472.9,21.5 Z M459.8,30 L456.6,32.3 L459.8,34.6 Z" fill="#12a5e6"/>
<path d="M499.6,15 V32.7 H519" stroke="#8a8a8a" stroke-width="1.1" fill="none"/>
<path d="M501,30.5 L504,24.5 L506,29 L509,22 L511,25" stroke="#2f8fc0" stroke-width="1.1" fill="none"/>
<path d="M509.5,23 L511.5,21.5 L513,26.5 L516.5,17" stroke="#2f8fc0" stroke-width="1.1" fill="none" stroke-dasharray="1.6 1.2"/>
<rect x="546" y="23.5" width="2.8" height="8.7" fill="#7d7d7d"/><rect x="550.3" y="20" width="2.8" height="12.2" fill="#7d7d7d"/><rect x="554.7" y="25" width="2.8" height="7.2" fill="#7d7d7d"/>
<path d="M555,13.4 H569.4 V21 H559 L557,23.2 V21 H555 Z" fill="#8fcfc6"/>
<path d="M557,15.7 H567.5 M557,18.2 H564" stroke="#4b9a92" stroke-width="1"/>
<path d="M585,17.5 V14.5 Q585,13.2 586.3,13.2 H589.5 M603,13.2 H606.2 Q607.4,13.2 607.4,14.5 V17.5 M607.4,30.5 V33.7 Q607.4,35 606.2,35 H603 M589.5,35 H586.3 Q585,35 585,33.7 V30.5" stroke="#12a5e6" stroke-width="1.3" fill="none"/>
<path d="M587,15 L592.5,20.5 M605.4,15 L600,20.5 M587,33 L592.5,27.7 M605.4,33 L600,27.7" stroke="#12a5e6" stroke-width="1.1" fill="none"/>
<rect x="593.5" y="21.6" width="5.2" height="5.2" fill="none" stroke="#ddd" stroke-width="1.1"/>
<rect x="626.5" y="11.5" width="52.5" height="25" fill="none" stroke="#8d8d8d" stroke-width="1"/>
<path d="M637.2,17 H640.4 V29.6 H637.2" stroke="#12a5e6" stroke-width="1.3" fill="none"/>
<rect x="645" y="16.0" width="3" height="3" fill="#f0b866"/><rect x="649.3" y="17.0" width="3.8" height="1" fill="#9a9a9a"/>
<rect x="645" y="20.1" width="3" height="3" fill="#4db6ac"/><rect x="649.3" y="21.1" width="3.8" height="1" fill="#9a9a9a"/>
<rect x="645" y="24.1" width="3" height="3" fill="#e8502f"/><rect x="649.3" y="25.1" width="3.8" height="1" fill="#9a9a9a"/>
<rect x="645" y="28.1" width="3" height="3" fill="#86ad3c"/><rect x="649.3" y="29.1" width="3.8" height="1" fill="#9a9a9a"/>
<path d="M658.6,22.2 H668 L663.3,26.9 Z" fill="#b0b0b0"/>
<path d="M1130,23 H1116 M1121.5,17.2 L1115.7,23 L1121.5,28.8" stroke="#d0d0d0" stroke-width="2" fill="none"/>
<path d="M1143,23 H1157 M1151.5,17.2 L1157.3,23 L1151.5,28.8" stroke="#707070" stroke-width="2" fill="none"/>
<path d="M1171,15 H1183.5 L1187,18.5 V31 H1171 Z" fill="#cdcdcd"/><rect x="1178.2" y="15" width="2.6" height="4" fill="#4a4a4a"/>
<path d="M1201.5,20 V16.4 H1212.5 V20" fill="none" stroke="#cdcdcd" stroke-width="1.5"/><path d="M1198.8,21.5 Q1198.8,19.5 1200.8,19.5 H1213.2 Q1215.2,19.5 1215.2,21.5 V28 H1198.8 Z" fill="#cdcdcd"/><rect x="1202" y="25.8" width="10" height="4.6" fill="#4a4a4a" stroke="#cdcdcd" stroke-width="1.4"/><rect x="1200.6" y="21.3" width="2" height="1.2" fill="#4a4a4a"/>
<path d="M1257.3,17 L1269,29 M1269,17 L1257.3,29" stroke="#d8d8d8" stroke-width="1.3" fill="none"/></svg>
<div class="t" style="left:1230.8px;top:14px;font-size:15px;line-height:17px;color:#d8d8d8;letter-spacing:-1.16px;font-weight:bold;">?</div>
<svg width="57" height="642" style="left:0;top:0"><path d="M18.53,80.76 A10.60,10.60 0 0 1 21.64,71.47" stroke="#cfcfcf" stroke-width="3.2" fill="none"/>
<path d="M24.35,69.57 A10.60,10.60 0 0 1 39.47,80.76" stroke="#cfcfcf" stroke-width="3.2" fill="none"/>
<path d="M23.2,70 L27.8,82.4 A2.7,2.7 0 0 0 32.6,79.9 Z" fill="#cfcfcf"/>
<rect x="17.6" y="113.3" width="3" height="23" fill="#cfcfcf"/><rect x="22.6" y="113.3" width="18.6" height="3" fill="#cfcfcf"/>
<rect x="22.6" y="118.3" width="3" height="3" fill="#cfcfcf"/>
<rect x="27.8" y="118.3" width="3" height="3" fill="#cfcfcf"/>
<rect x="33.0" y="118.3" width="3" height="3" fill="#cfcfcf"/>
<rect x="38.2" y="118.3" width="3" height="3" fill="#cfcfcf"/>
<rect x="22.6" y="123.3" width="3" height="3" fill="#cfcfcf"/>
<rect x="27.8" y="123.3" width="3" height="3" fill="#cfcfcf"/>
<rect x="33.0" y="123.3" width="3" height="3" fill="#cfcfcf"/>
<rect x="38.2" y="123.3" width="3" height="3" fill="#cfcfcf"/>
<rect x="22.6" y="128.3" width="3" height="3" fill="#cfcfcf"/>
<rect x="27.8" y="128.3" width="3" height="3" fill="#cfcfcf"/>
<rect x="33.0" y="128.3" width="3" height="3" fill="#cfcfcf"/>
<rect x="38.2" y="128.3" width="3" height="3" fill="#cfcfcf"/>
<rect x="22.6" y="133.3" width="3" height="3" fill="#cfcfcf"/>
<rect x="27.8" y="133.3" width="3" height="3" fill="#cfcfcf"/>
<rect x="33.0" y="133.3" width="3" height="3" fill="#cfcfcf"/>
<rect x="38.2" y="133.3" width="3" height="3" fill="#cfcfcf"/>
<rect x="16.95" y="162.0" width="3.2" height="24.0" fill="#cfcfcf"/>
<rect x="21.96" y="171.0" width="3.2" height="15.0" fill="#cfcfcf"/>
<rect x="26.97" y="167.0" width="3.2" height="19.0" fill="#cfcfcf"/>
<rect x="31.97" y="165.0" width="3.2" height="21.0" fill="#cfcfcf"/>
<rect x="36.98" y="176.0" width="3.2" height="10.0" fill="#cfcfcf"/>
<rect x="17" y="210.3" width="24.0" height="3" fill="#cfcfcf"/>
<rect x="17" y="215.5" width="14.5" height="3" fill="#cfcfcf"/>
<rect x="17" y="220.7" width="20.0" height="3" fill="#cfcfcf"/>
<rect x="17" y="225.9" width="21.0" height="3" fill="#cfcfcf"/>
<rect x="17" y="231.1" width="10.0" height="3" fill="#cfcfcf"/>
<path d="M17,270.5 C21,263 25,263 29,267 S37,272 41,263.5 M17,280 C21,272.5 25,272.5 29,276.5 S37,281.5 41,273" stroke="#d8d8d8" stroke-width="1.2" fill="none"/>
<rect x="6.5" y="298.5" width="45.5" height="45" fill="#2b2b2b" stroke="#f2f2f2" stroke-width="1"/>
<path d="M17,319 C21,313 25,313 29,318 S37,324 41,317 V332.6 H17 Z" fill="#e07565"/>
<path d="M17,323 C21,317 25,317 29,322 S37,328 41,321 V332.6 H17 Z" fill="#fff"/>
<path d="M17,327 C21,322 25,322 29,326 S37,331 41,325.5 V332.6 H17 Z" fill="#5a9dc6"/>
<path d="M28.5,370 V358.5 A11.5,11.5 0 1 0 40,370 Z" fill="#cfcfcf"/>
<path d="M30.3,368.2 V357.6 A10.6,10.6 0 0 1 40.9,368.2 Z" fill="#cfcfcf"/>
<circle cx="34.7" cy="412.0" r="4.6" fill="#cfcfcf"/>
<circle cx="22.0" cy="417.6" r="4.1" fill="#cfcfcf"/>
<circle cx="29.4" cy="423.5" r="3.1" fill="#cfcfcf"/>
<circle cx="23.0" cy="428.0" r="2.2" fill="#cfcfcf"/>
<circle cx="36.8" cy="426.0" r="1.5" fill="#cfcfcf"/>
<rect x="16.8" y="456.2" width="9.2" height="23.5" fill="#cfcfcf"/>
<rect x="27.3" y="456.2" width="6.6" height="16.0" fill="#cfcfcf"/>
<rect x="35.0" y="456.2" width="6.2" height="5.6" fill="#cfcfcf"/>
<rect x="35.0" y="463.0" width="6.2" height="9.2" fill="#cfcfcf"/>
<rect x="27.3" y="473.4" width="13.9" height="6.3" fill="#cfcfcf"/>
<circle cx="29" cy="517" r="11.5" fill="#cfcfcf"/>
<path d="M29,505.5 V528.5 M17.5,517 H40.5 M19,511.3 H39 M19,522.7 H39 M29,505.5 C21,510 21,524 29,528.5 M29,505.5 C37,510 37,524 29,528.5" stroke="#4a4a4a" stroke-width="1.3" fill="none"/></svg>
<div class="t" style="left:879.5px;top:57px;font-size:11.7px;line-height:13px;color:#e2e2e2;letter-spacing:0.24px;-webkit-text-stroke:.3px #e2e2e2;">Drop Zones</div>
<div class="abs" style="left:872px;top:78px;width:212px;height:1px;background:#333"></div>
<div class="abs" style="left:883px;top:90px;width:190px;height:90px;background:#555;border:1px solid #2a2a2a"></div>
<div class="abs" style="left:883px;top:183px;width:190px;height:90px;background:#555;border:1px solid #2a2a2a"></div>
<div class="abs" style="left:883px;top:276px;width:190px;height:28px;background:#494949;border:1px solid #2a2a2a"></div>
<div class="abs" style="left:883px;top:307px;width:190px;height:28px;background:#494949;border:1px solid #2a2a2a"></div>
<div class="abs" style="left:883px;top:338px;width:190px;height:90px;background:#555;border:1px solid #2a2a2a"></div>
<div class="abs" style="left:883px;top:431px;width:190px;height:90px;background:#555;border:1px solid #2a2a2a"></div>
<div class="t" style="left:914.6px;top:98px;font-size:11.7px;line-height:13px;color:#e2e2e2;letter-spacing:0.14px;-webkit-text-stroke:.3px #e2e2e2;">Categories</div>
<div class="t" style="left:914.6px;top:191px;font-size:11.7px;line-height:13px;color:#e2e2e2;letter-spacing:-0.07px;-webkit-text-stroke:.3px #e2e2e2;">Values</div>
<div class="t" style="left:914.6px;top:284px;font-size:11.7px;line-height:13px;color:#e2e2e2;letter-spacing:-0.06px;-webkit-text-stroke:.3px #e2e2e2;">Trellis Vertical</div>
<div class="t" style="left:914.6px;top:315px;font-size:11.7px;line-height:13px;color:#e2e2e2;letter-spacing:0.05px;-webkit-text-stroke:.3px #e2e2e2;">Trellis Horizontal</div>
<div class="t" style="left:914.6px;top:346px;font-size:11.7px;line-height:13px;color:#e2e2e2;letter-spacing:0.09px;-webkit-text-stroke:.3px #e2e2e2;">Filters</div>
<div class="t" style="left:914.6px;top:439px;font-size:11.7px;line-height:13px;color:#e2e2e2;letter-spacing:0.31px;-webkit-text-stroke:.3px #e2e2e2;">Color</div>
<div class="abs" style="left:890.3px;top:121.3px;width:175.4px;height:23.4px;border-radius:6px;background:#2a6a9b;border:1px solid #235a85"></div>
<div class="abs" style="left:910.2px;top:214.3px;width:153.8px;height:23.4px;border-radius:6px;background:#d67b3b;border:1px solid #b9652c"></div>
<div class="abs" style="left:910.2px;top:369.3px;width:153.8px;height:23.4px;border-radius:6px;background:#2a6a9b;border:1px solid #235a85"></div>
<div class="abs" style="left:890.3px;top:462.3px;width:175.4px;height:23.4px;border-radius:6px;background:#2a6a9b;border:1px solid #235a85"></div>
<div class="t" style="left:913.6px;top:127px;font-size:11.7px;line-height:13px;color:#fff;letter-spacing:0.09px;">dateKey full month na...</div>
<div class="t" style="left:934.5px;top:220px;font-size:11.7px;line-height:13px;color:#fff;letter-spacing:0.17px;">Net Profit</div>
<div class="t" style="left:934.5px;top:375px;font-size:11.7px;line-height:13px;color:#fff;letter-spacing:-0.12px;">dateKey year</div>
<div class="t" style="left:913.6px;top:468px;font-size:11.7px;line-height:13px;color:#fff;letter-spacing:0.21px;">Manufacturer</div>
<div class="t" style="left:893.2px;top:214px;font-size:17px;line-height:19px;color:#bdbdbd;letter-spacing:-1.50px;">y</div>
<div class="t" style="left:900.6px;top:221px;font-size:10px;line-height:11px;color:#bdbdbd;letter-spacing:-1.56px;">1</div>
<svg width="1277" height="642" style="left:0;top:0"><rect x="898.1" y="128.0" width="2.9" height="3.1" fill="#fff"/>
<rect x="902.1" y="128.0" width="2.9" height="3.1" fill="#fff"/>
<rect x="898.1" y="132.0" width="2.9" height="3.1" fill="#fff"/>
<rect x="902.1" y="132.0" width="2.9" height="3.1" fill="#fff"/>
<rect x="898.1" y="136.0" width="2.9" height="3.1" fill="#fff"/>
<rect x="902.1" y="136.0" width="2.9" height="3.1" fill="#fff"/>
<path d="M1050.9,129.3 l7.6,7.6 m0,-7.6 l-7.6,7.6" stroke="#fff" stroke-width="1.3" fill="none"/>
<rect x="898.1" y="469.0" width="2.9" height="3.1" fill="#fff"/>
<rect x="902.1" y="469.0" width="2.9" height="3.1" fill="#fff"/>
<rect x="898.1" y="473.0" width="2.9" height="3.1" fill="#fff"/>
<rect x="902.1" y="473.0" width="2.9" height="3.1" fill="#fff"/>
<rect x="898.1" y="477.0" width="2.9" height="3.1" fill="#fff"/>
<rect x="902.1" y="477.0" width="2.9" height="3.1" fill="#fff"/>
<path d="M1050.9,470.3 l7.6,7.6 m0,-7.6 l-7.6,7.6" stroke="#fff" stroke-width="1.3" fill="none"/>
<path d="M1049.1,222.3 l7.6,7.6 m0,-7.6 l-7.6,7.6" stroke="#fff" stroke-width="1.3" fill="none"/>
<path d="M1049.1,377.3 l7.6,7.6 m0,-7.6 l-7.6,7.6" stroke="#fff" stroke-width="1.3" fill="none"/>
<path d="M891.6,102.4 H902.6 V108.2 H891.6 Z M894.8,102.4 V99 H899.4 V102.4" stroke="#5ea7d4" stroke-width="1.1" fill="none"/>
<rect x="891.5" y="197.2" width="2.2" height="4.0" fill="none" stroke="#d88b4a" stroke-width="1"/>
<rect x="895.3" y="195.0" width="2.2" height="6.2" fill="none" stroke="#d88b4a" stroke-width="1"/>
<rect x="899.1" y="192.8" width="2.2" height="8.4" fill="none" stroke="#d88b4a" stroke-width="1"/>
<rect x="915.5" y="225.5" width="2.9" height="5.3" fill="#fff"/>
<rect x="919.2" y="223.0" width="2.9" height="7.8" fill="#fff"/>
<rect x="922.9" y="220.5" width="2.9" height="10.3" fill="#fff"/>
<path d="M891,286.5 H903 M891,290.5 H903 M891,294.5 H903 M894.5,284 V297" stroke="#5fc0a8" stroke-width="1.1" fill="none"/>
<path d="M893.5,316 V328 M897.5,316 V328 M901.5,316 V328 M891,324.5 H904" stroke="#5fc0a8" stroke-width="1.1" fill="none"/>
<path d="M891,346.6 H903.6 L898.6,352.6 V358.6 L896,356.6 V352.6 Z" stroke="#c86cc8" stroke-width="1.2" fill="none" stroke-linejoin="round"/>
<path d="M893.5,375.5 H902 M893.5,379 H902 M893.5,382.5 H902 M893.5,386 H902" stroke="#ccc" stroke-width="1.1"/><path d="M903,374.3 h2.6 l-1.3,1.6 z" fill="#ccc"/>
<rect x="915.6" y="375.6" width="2.6" height="2.6" fill="#fff"/><rect x="915.6" y="379.6" width="2.6" height="2.6" fill="#fff"/><rect x="915.6" y="383.6" width="2.6" height="2.6" fill="#fff"/><rect x="919.6" y="375.6" width="2.6" height="2.6" fill="#fff"/>
<circle cx="924.8" cy="383" r="4.3" fill="#2a6a9b" stroke="#fff" stroke-width="1.2"/><path d="M924.8,380.4 V383.2 H927" stroke="#fff" stroke-width="1" fill="none"/>
<circle cx="897.5" cy="441.5" r="1.7" fill="#a36ad6"/>
<circle cx="893.0" cy="445.5" r="1.7" fill="#e8913a"/>
<circle cx="902.0" cy="445.5" r="1.7" fill="#d8b040"/>
<circle cx="894.5" cy="450.5" r="1.7" fill="#4fb0a0"/>
<circle cx="900.5" cy="450.5" r="1.7" fill="#e05a4a"/></svg>
<div class="t" style="left:1094.6px;top:57px;font-size:11.7px;line-height:13px;color:#e2e2e2;letter-spacing:0.19px;-webkit-text-stroke:.3px #e2e2e2;">Dimensions</div>
<div class="abs" style="left:1087px;top:78px;width:190px;height:1px;background:#333"></div>
<div class="abs" style="left:1087px;top:108px;width:190px;height:1px;background:#333"></div>
<div class="abs" style="left:1087px;top:109px;width:190px;height:236px;background:#545454"></div>
<div class="abs" style="left:1096px;top:231px;width:174px;height:21px;background:#2a6a9b;border:1px solid #1f5a88"></div>
<div class="t" style="left:1132.8px;top:116px;font-size:11.7px;line-height:13px;color:#f0f0f0;letter-spacing:0.12px;">customerProfile</div>
<div class="t" style="left:1132.8px;top:140px;font-size:11.7px;line-height:13px;color:#f0f0f0;letter-spacing:0.06px;">customers</div>
<div class="t" style="left:1132.8px;top:164px;font-size:11.7px;line-height:13px;color:#f0f0f0;letter-spacing:0.18px;">data</div>
<div class="t" style="left:1132.8px;top:188px;font-size:11.7px;line-height:13px;color:#f0f0f0;letter-spacing:0.13px;">manufacturer details</div>
<div class="t" style="left:1132.8px;top:212px;font-size:11.7px;line-height:13px;color:#f0f0f0;letter-spacing:0.09px;">manufacturers</div>
<div class="t" style="left:1132.8px;top:260px;font-size:11.7px;line-height:13px;color:#f0f0f0;letter-spacing:0.27px;">products</div>
<div class="t" style="left:1132.8px;top:284px;font-size:11.7px;line-height:13px;color:#f0f0f0;letter-spacing:0.41px;">promotions</div>
<div class="t" style="left:1144.6px;top:236px;font-size:11.7px;line-height:13px;color:#25c0f0;letter-spacing:0.21px;">Manufacturer</div>
<svg width="1277" height="642" style="left:0;top:0"><path d="M1093,89.5 h1.6 M1096.2,89.5 h6.8" stroke="#e0e0e0" stroke-width="1.1"/>
<path d="M1093,92.2 h1.6 M1096.2,92.2 h6.8" stroke="#e0e0e0" stroke-width="1.1"/>
<path d="M1093,95.0 h1.6 M1096.2,95.0 h6.8" stroke="#e0e0e0" stroke-width="1.1"/>
<path d="M1093,97.8 h1.6 M1096.2,97.8 h6.8" stroke="#e0e0e0" stroke-width="1.1"/>
<circle cx="1264.6" cy="92.8" r="4.5" fill="none" stroke="#d0d0d0" stroke-width="1.4"/><path d="M1267.8,96 L1271.5,99.8" stroke="#d0d0d0" stroke-width="1.6"/>
<path d="M1104.2,118.5 v7 l3.6,-3.5 z" fill="#9a9a9a"/>
<path d="M1118.5,116.5 V126.5 H1129" stroke="#5ea7d4" stroke-width="1.1" fill="none"/>
<path d="M1116.6,118.2 l1.9,-2.2 l1.9,2.2 M1127.2,124.6 l2.2,1.9 l-2.2,1.9" stroke="#5ea7d4" stroke-width="1" fill="none"/>
<path d="M1120.8,124.2 L1127.2,117.7 M1123.2,117.5 H1127.4 V121.7" stroke="#d8d8d8" stroke-width="1" fill="none"/>
<path d="M1104.2,142.5 v7 l3.6,-3.5 z" fill="#9a9a9a"/>
<path d="M1118.5,140.5 V150.5 H1129" stroke="#5ea7d4" stroke-width="1.1" fill="none"/>
<path d="M1116.6,142.2 l1.9,-2.2 l1.9,2.2 M1127.2,148.6 l2.2,1.9 l-2.2,1.9" stroke="#5ea7d4" stroke-width="1" fill="none"/>
<path d="M1120.8,148.2 L1127.2,141.7 M1123.2,141.5 H1127.4 V145.7" stroke="#d8d8d8" stroke-width="1" fill="none"/>
<path d="M1104.2,166.5 v7 l3.6,-3.5 z" fill="#9a9a9a"/>
<path d="M1118.5,164.5 V174.5 H1129" stroke="#5ea7d4" stroke-width="1.1" fill="none"/>
<path d="M1116.6,166.2 l1.9,-2.2 l1.9,2.2 M1127.2,172.6 l2.2,1.9 l-2.2,1.9" stroke="#5ea7d4" stroke-width="1" fill="none"/>
<path d="M1120.8,172.2 L1127.2,165.7 M1123.2,165.5 H1127.4 V169.7" stroke="#d8d8d8" stroke-width="1" fill="none"/>
<path d="M1104.2,190.5 v7 l3.6,-3.5 z" fill="#9a9a9a"/>
<path d="M1118.5,188.5 V198.5 H1129" stroke="#5ea7d4" stroke-width="1.1" fill="none"/>
<path d="M1116.6,190.2 l1.9,-2.2 l1.9,2.2 M1127.2,196.6 l2.2,1.9 l-2.2,1.9" stroke="#5ea7d4" stroke-width="1" fill="none"/>
<path d="M1120.8,196.2 L1127.2,189.7 M1123.2,189.5 H1127.4 V193.7" stroke="#d8d8d8" stroke-width="1" fill="none"/>
<path d="M1102.5,216.0 h6.4 l-3.2,4 z" fill="#e8e8e8"/>
<path d="M1118.5,212.5 V222.5 H1129" stroke="#5ea7d4" stroke-width="1.1" fill="none"/>
<path d="M1116.6,214.2 l1.9,-2.2 l1.9,2.2 M1127.2,220.6 l2.2,1.9 l-2.2,1.9" stroke="#5ea7d4" stroke-width="1" fill="none"/>
<path d="M1120.8,220.2 L1127.2,213.7 M1123.2,213.5 H1127.4 V217.7" stroke="#d8d8d8" stroke-width="1" fill="none"/>
<path d="M1104.2,262.5 v7 l3.6,-3.5 z" fill="#9a9a9a"/>
<path d="M1118.5,260.5 V270.5 H1129" stroke="#5ea7d4" stroke-width="1.1" fill="none"/>
<path d="M1116.6,262.2 l1.9,-2.2 l1.9,2.2 M1127.2,268.6 l2.2,1.9 l-2.2,1.9" stroke="#5ea7d4" stroke-width="1" fill="none"/>
<path d="M1120.8,268.2 L1127.2,261.7 M1123.2,261.5 H1127.4 V265.7" stroke="#d8d8d8" stroke-width="1" fill="none"/>
<path d="M1104.2,286.5 v7 l3.6,-3.5 z" fill="#9a9a9a"/>
<path d="M1118.5,284.5 V294.5 H1129" stroke="#5ea7d4" stroke-width="1.1" fill="none"/>
<path d="M1116.6,286.2 l1.9,-2.2 l1.9,2.2 M1127.2,292.6 l2.2,1.9 l-2.2,1.9" stroke="#5ea7d4" stroke-width="1" fill="none"/>
<path d="M1120.8,292.2 L1127.2,285.7 M1123.2,285.5 H1127.4 V289.7" stroke="#d8d8d8" stroke-width="1" fill="none"/>
<rect x="1129.8" y="236.8" width="2.6" height="2.8" fill="#5b93bd"/>
<rect x="1133.6" y="236.8" width="2.6" height="2.8" fill="#5b93bd"/>
<rect x="1129.8" y="240.6" width="2.6" height="2.8" fill="#5b93bd"/>
<rect x="1133.6" y="240.6" width="2.6" height="2.8" fill="#5b93bd"/>
<rect x="1129.8" y="244.4" width="2.6" height="2.8" fill="#5b93bd"/>
<rect x="1133.6" y="244.4" width="2.6" height="2.8" fill="#5b93bd"/></svg>
<div class="abs" style="left:1087px;top:348px;width:95px;height:31px;background:#363636"></div>
<div class="t" style="left:1094.6px;top:357px;font-size:11.7px;line-height:13px;color:#e2e2e2;letter-spacing:0.02px;-webkit-text-stroke:.3px #e2e2e2;">Measures</div>
<div class="t" style="left:1190.2px;top:357px;font-size:11.7px;line-height:13px;color:#e2e2e2;letter-spacing:0.00px;-webkit-text-stroke:.3px #e2e2e2;">Elements</div>
<div class="abs" style="left:1087px;top:408px;width:190px;height:1px;background:#333"></div>
<div class="abs" style="left:1087px;top:436px;width:190px;height:1px;background:#333"></div>
<div class="abs" style="left:1087px;top:437px;width:190px;height:205px;background:#545454"></div>
<div class="abs" style="left:1267px;top:447px;width:6px;height:146px;background:#646464;border-radius:3px"></div>
<div class="t" style="left:1119.6px;top:416px;font-size:11.5px;line-height:12px;color:#f4f4f4;letter-spacing:0.05px;font-weight:bold;">Manufacturer</div>
<div class="t" style="left:1134.6px;top:445px;font-size:11.7px;line-height:13px;color:#f0f0f0;letter-spacing:0.02px;">Acme</div>
<div class="t" style="left:1134.6px;top:469px;font-size:11.7px;line-height:13px;color:#f0f0f0;letter-spacing:-0.04px;">Adihash</div>
<div class="t" style="left:1134.6px;top:493px;font-size:11.7px;line-height:13px;color:#f0f0f0;letter-spacing:-0.69px;">Esics</div>
<div class="t" style="left:1134.6px;top:517px;font-size:11.7px;line-height:13px;color:#f0f0f0;letter-spacing:0.30px;">Nuke</div>
<div class="t" style="left:1134.6px;top:541px;font-size:11.7px;line-height:13px;color:#f0f0f0;letter-spacing:-0.02px;">Old Balance</div>
<div class="t" style="left:1134.6px;top:565px;font-size:11.7px;line-height:13px;color:#f0f0f0;letter-spacing:0.24px;">Over Armour</div>
<div class="t" style="left:1134.6px;top:589px;font-size:11.7px;line-height:13px;color:#f0f0f0;letter-spacing:-0.10px;">Poomah</div>
<div class="t" style="left:1134.6px;top:613px;font-size:11.7px;line-height:13px;color:#f0f0f0;letter-spacing:-0.23px;">Princess</div>
<div class="t" style="left:1134.6px;top:637px;font-size:11.7px;line-height:13px;color:#f0f0f0;letter-spacing:0.23px;">Pikatsu</div>
<svg width="1277" height="642" style="left:0;top:0"><rect x="1092.7" y="388" width="11.6" height="11" fill="none" stroke="#d4d4d4" stroke-width="1.1"/><path d="M1095.2,390.3 l6.6,6.4 m0,-6.4 l-6.6,6.4" stroke="#d4d4d4" stroke-width="1.1"/>
<path d="M1121,399.2 H1113.5 V386.9 H1126 V393.5" fill="none" stroke="#d4d4d4" stroke-width="1.1"/><path d="M1121.6,394.6 l4.6,4.6 m0,-4.6 l-4.6,4.6" stroke="#e8502f" stroke-width="1.3"/>
<path d="M1181.5,398.7 V387.5 H1186.5 L1188,389.2 H1195.3 V398.7 Z" fill="none" stroke="#d4d4d4" stroke-width="1.1"/>
<text x="1183.6" y="396.8" font-size="7.5" fill="#d4d4d4" font-family="Liberation Sans,sans-serif">Fx</text>
<path d="M1205.6,391 h5 l-2.5,4.2 z M1245.5,391 h5 l-2.5,4.2 z" fill="#f0f0f0"/>
<circle cx="1227.4" cy="392.4" r="4.6" fill="none" stroke="#d4d4d4" stroke-width="1.4"/><path d="M1230.8,396 L1234,399.6" stroke="#d4d4d4" stroke-width="1.6"/>
<path d="M1260.6,391.5 A5,5 0 0 1 1270.2,391.5 M1270.2,394.8 A5,5 0 0 1 1260.6,394.8" fill="none" stroke="#d4d4d4" stroke-width="1.3"/><path d="M1268.4,391.6 h2.6 v-2.6 M1262.4,394.6 h-2.6 v2.6" fill="none" stroke="#d4d4d4" stroke-width="1"/>
<rect x="1099" y="416.4" width="11.4" height="11.2" fill="#5d6b78" stroke="#f4f4f4" stroke-width="1.8"/>
<rect x="1098.2" y="445.3" width="13.2" height="13.2" fill="#f2f2f2" stroke="#1c1c1c" stroke-width="1"/>
<path d="M1101,452.0 l2.8,3 l5,-6.3" fill="none" stroke="#111" stroke-width="1.7"/>
<rect x="1121.4" y="448.3" width="5.4" height="5.4" fill="#4d9fd0"/>
<rect x="1098.2" y="469.3" width="13.2" height="13.2" fill="#f2f2f2" stroke="#1c1c1c" stroke-width="1"/>
<path d="M1101,476.0 l2.8,3 l5,-6.3" fill="none" stroke="#111" stroke-width="1.7"/>
<rect x="1121.4" y="472.3" width="5.4" height="5.4" fill="#4d9fd0"/>
<rect x="1098.2" y="493.3" width="13.2" height="13.2" fill="#f2f2f2" stroke="#1c1c1c" stroke-width="1"/>
<path d="M1101,500.0 l2.8,3 l5,-6.3" fill="none" stroke="#111" stroke-width="1.7"/>
<rect x="1121.4" y="496.3" width="5.4" height="5.4" fill="#4d9fd0"/>
<rect x="1098.2" y="517.3" width="13.2" height="13.2" fill="#f2f2f2" stroke="#1c1c1c" stroke-width="1"/>
<path d="M1101,524.0 l2.8,3 l5,-6.3" fill="none" stroke="#111" stroke-width="1.7"/>
<rect x="1121.4" y="520.3" width="5.4" height="5.4" fill="#4d9fd0"/>
<rect x="1098.2" y="541.3" width="13.2" height="13.2" fill="#f2f2f2" stroke="#1c1c1c" stroke-width="1"/>
<path d="M1101,548.0 l2.8,3 l5,-6.3" fill="none" stroke="#111" stroke-width="1.7"/>
<rect x="1121.4" y="544.3" width="5.4" height="5.4" fill="#4d9fd0"/>
<rect x="1098.2" y="565.3" width="13.2" height="13.2" fill="#f2f2f2" stroke="#1c1c1c" stroke-width="1"/>
<rect x="1121.4" y="568.3" width="5.4" height="5.4" fill="#4d9fd0"/>
<rect x="1098.2" y="589.3" width="13.2" height="13.2" fill="#f2f2f2" stroke="#1c1c1c" stroke-width="1"/>
<rect x="1121.4" y="592.3" width="5.4" height="5.4" fill="#4d9fd0"/>
<rect x="1098.2" y="613.3" width="13.2" height="13.2" fill="#f2f2f2" stroke="#1c1c1c" stroke-width="1"/>
<rect x="1121.4" y="616.3" width="5.4" height="5.4" fill="#4d9fd0"/>
<rect x="1098.2" y="637.3" width="13.2" height="13.2" fill="#f2f2f2" stroke="#1c1c1c" stroke-width="1"/>
<rect x="1121.4" y="640.3" width="5.4" height="5.4" fill="#4d9fd0"/></svg>
<svg width="1277" height="642" style="left:0;top:0"><path d="M489.2,61.2 L494.5,66.4 L499.8,61.2" stroke="#444" stroke-width="1.2" fill="none"/>
<path d="M849.6,69.6 V64.2 L845.4,60.4 V58.5 H856.6 V60.4 L852.4,64.2" stroke="#7b8da2" stroke-width="1.1" fill="none" stroke-linejoin="round" stroke-dasharray="6.3 0.8 2 0.8 2 0.8 20 0.8 2 0.8 2 0.8 3"/><path d="M849.4,69.5 h1.6" stroke="#7b8da2" stroke-width="1.1"/>
<path d="M851.2,67.3 L853.5,69.5 L858,64.6" stroke="#4caf3a" stroke-width="1.2" fill="none"/>
<rect x="66" y="58.3" width="9.2" height="1.7" fill="#c4c4c4"/>
<rect x="66" y="61.8" width="9.2" height=".9" fill="#cfcfcf"/>
<rect x="66" y="64.6" width="9.2" height=".9" fill="#cfcfcf"/>
<rect x="66" y="67.5" width="9.2" height=".9" fill="#cfcfcf"/>
<path d="M76.4,58.2 h2.8 l-1.4,1.7 z" fill="#bbb"/>
<path d="M77.6,64.6 L79.6,64.6 L78.4,67 L79.8,67 L75.9,71.6 L76.9,68.3 L75.6,68.3 Z" fill="#f7941d"/></svg>
</div></div></div>
</body></html>
